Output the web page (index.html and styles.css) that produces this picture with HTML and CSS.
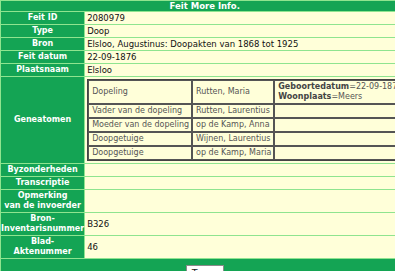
FILE: index.html
```html
<!DOCTYPE html>
<html lang="nl">
<head>
    <meta charset="UTF-8">
    <meta name="viewport" content="width=device-width, initial-scale=1.0">
    <title>Feit More Info.</title>
    <link rel="stylesheet" href="styles.css">
</head>
<body>

    <table class="feit">
        <tr><th colspan="2" class="kop">Feit More Info.</th></tr>
        <tr><th>Feit ID</th><td>2080979</td></tr>
        <tr><th>Type</th><td>Doop</td></tr>
        <tr><th>Bron</th><td>Elsloo, Augustinus: Doopakten van 1868 tot 1925</td></tr>
        <tr><th>Feit datum</th><td>22-09-1876</td></tr>
        <tr><th>Plaatsnaam</th><td>Elsloo</td></tr>

        <!-- Personen bij dit feit -->
        <tr>
            <th>Geneatomen</th>
            <td class="atomen">
                <table class="atomen-tabel">
                    <tr>
                        <td class="rol">Dopeling</td>
                        <td class="naam">Rutten, Maria</td>
                        <td><b>Geboortedatum</b>=22-09-1876<br><b>Woonplaats</b>=Meers</td>
                    </tr>
                    <tr><td class="rol">Vader van de dopeling</td><td class="naam">Rutten, Laurentius</td><td></td></tr>
                    <tr><td class="rol">Moeder van de dopeling</td><td class="naam">op de Kamp, Anna</td><td></td></tr>
                    <tr><td class="rol">Doopgetuige</td><td class="naam">Wijnen, Laurentius</td><td></td></tr>
                    <tr><td class="rol">Doopgetuige</td><td class="naam">op de Kamp, Maria</td><td></td></tr>
                </table>
            </td>
        </tr>

        <tr><th>Byzonderheden</th><td></td></tr>
        <tr><th>Transcriptie</th><td></td></tr>
        <tr><th>Opmerking<br>van de invoerder</th><td></td></tr>
        <tr><th>Bron-<br>Inventarisnummer</th><td>B326</td></tr>
        <tr><th>Blad-<br>Aktenummer</th><td>46</td></tr>
        <tr><td colspan="2" class="knoppen"><button onclick="history.back()">Terug</button></td></tr>
    </table>

</body>
</html>
```

FILE: styles.css
```css
body {
    margin: 0;
    font-family: "DejaVu Sans", Verdana, sans-serif;
    font-size: 8px;
    background-color: #ffffff;
}
.feit {
    width: 402px;
    border-spacing: 1px;
    background-color: #8fe48f;
}
.feit th {
    width: 87px;
    padding: 1px 0;
    line-height: 10px;
    background-color: #14a454;
    color: #ffffff;
    font-weight: bold;
    text-align: center;
}
.feit td {
    padding: 1px 2px;
    line-height: 10px;
    font-size: 8.5px;
    background-color: #ffffd9;
    color: #111111;
    text-align: left;
}
.feit th.kop {
    padding: 0;
    font-size: 8.5px;
}
.feit td.atomen {
    padding: 2px 2px;
    font-size: 8px;
}
.atomen-tabel {
    width: 100%;
    border: 1px solid #444444;
    border-spacing: 0;
}
.feit .atomen-tabel td {
    border: 1px solid #555555;
    padding: 1px 2px 1px 3px;
    font-size: 8px;
    color: #555555;
    white-space: nowrap;
}
.atomen-tabel b {
    color: #444444;
}
.atomen-tabel .rol, .atomen-tabel .naam {
    width: 1px;
}
.feit td.knoppen {
    background-color: #14a454;
    text-align: center;
    padding: 6px 0 4px;
}
.knoppen button {
    font-family: "DejaVu Sans", Verdana, sans-serif;
    font-size: 9.5px;
    padding: 1px 5px;
    background-color: #ffffff;
    border: 1px solid #8a8a8a;
    color: #222222;
}
```
